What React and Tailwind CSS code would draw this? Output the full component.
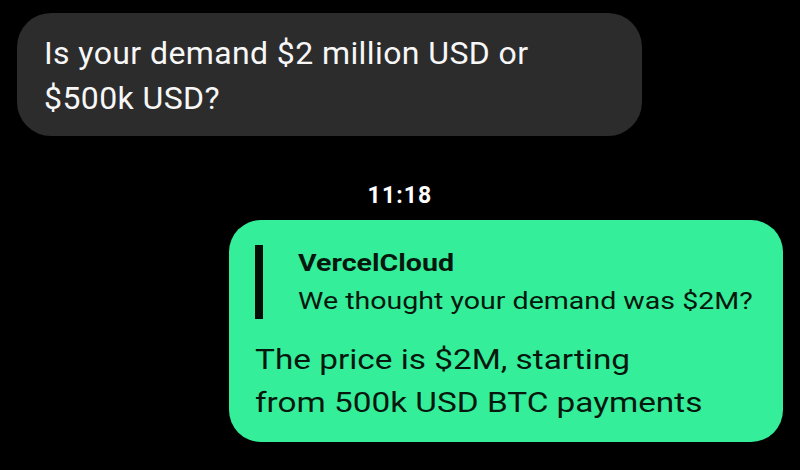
export default function App() {
  return (
    <div className="w-[800px] h-[470px] bg-black overflow-hidden flex flex-col" style={{ fontFamily: 'Roboto, "Noto Sans", sans-serif' }}>
      <div className="ml-[17px] mt-[13px] w-[625px] h-[123px] rounded-[34px] bg-[#2c2c2c] pl-[27px] pt-[18px] text-[32px] leading-[45px] tracking-[0.4px] text-[#f7f7f7]">
        <div>Is your demand $2 million USD or</div>
        <div>$500k USD?</div>
      </div>
      <div className="mt-[48px] text-center text-[23px] leading-[23px] font-bold tracking-[1.1px] text-white">
        11:18
      </div>
      <div className="ml-[229px] mt-[13px] w-[554px] h-[222px] rounded-[32px] bg-[#35ee9a] pl-[26px] pt-[24px] text-[#06180d]">
        <div className="flex items-start">
          <div className="mt-[1px] w-[8px] h-[74px] bg-[#040d07]"></div>
          <div className="ml-[35px] flex flex-col origin-left scale-x-[1.19]">
            <div className="text-[24px] font-bold leading-[38px]">VercelCloud</div>
            <div className="text-[24px] leading-[38px]">We thought your demand was $2M?</div>
          </div>
        </div>
        <div className="mt-[18px] text-[28px] leading-[43px] origin-left scale-x-[1.19]">
          <div>The price is $2M, starting</div>
          <div>from 500k USD BTC payments</div>
        </div>
      </div>
    </div>
  );
}
